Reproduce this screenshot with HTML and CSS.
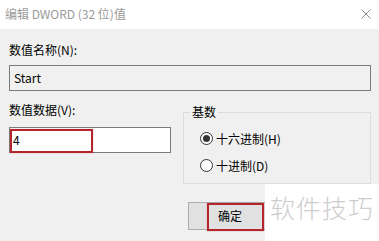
FILE: index.html
```html
<!DOCTYPE html>
<html lang="zh-CN">
<head>
    <meta charset="UTF-8">
    <title>编辑 DWORD (32 位)值</title>
    <link rel="stylesheet" href="styles.css">
</head>
<body>
    <div class="titlebar">
        <span class="title">编辑 DWORD (32 位)值</span>
        <svg class="close" width="10" height="10" viewBox="0 0 10 10">
            <path d="M0.5 0.5 L9.5 9.5 M9.5 0.5 L0.5 9.5" stroke="#8c8c8c" stroke-width="1" fill="none"/>
        </svg>
    </div>

    <div class="content">
        <div class="label">数值名称(N):</div>
        <div class="field readonly">Start</div>

        <div class="row">
            <div class="col-left">
                <div class="label gap">数值数据(V):</div>
                <div class="field value">
                    4
                    <span class="mark mark-value"></span>
                </div>
            </div>

            <div class="group">
                <div class="group-title">基数</div>
                <div class="radios">
                    <div class="radio checked"><span class="dot"></span>十六进制(H)</div>
                    <div class="radio"><span class="dot"></span>十进制(D)</div>
                </div>
            </div>
        </div>

        <div class="actions">
            <div class="btn">
                确定
                <span class="mark mark-btn"></span>
            </div>
        </div>
    </div>

    <!-- watermark over the corner -->
    <div class="watermark">软件技巧</div>
</body>
</html>
```

FILE: styles.css
```css
* {
    box-sizing: border-box;
}

body {
    margin: 0;
    width: 379px;
    height: 241px;
    overflow: hidden;
    background: #f0f0f0;
    font-family: "Noto Sans CJK SC", "Noto Sans", sans-serif;
    font-size: 12px;
    color: #000;
    position: relative;
}

.titlebar {
    height: 29px;
    background: #fff;
    display: flex;
    align-items: center;
    justify-content: space-between;
    padding: 0 8px 2px 5px;
}

.title {
    color: #9a9a9a;
    font-size: 12px;
}

.content {
    padding: 13px 8px 0 9px;
}

.label {
    line-height: 16px;
    margin-bottom: 7px;
}

.label.gap {
    margin-bottom: 9px;
}

.field {
    height: 26px;
    border: 1px solid #7a7a7a;
    padding-left: 4px;
    line-height: 23px;
    position: relative;
}

.readonly {
    background: #f0f0f0;
}

.value {
    background: #fff;
    padding-left: 3px;
}

.row {
    display: grid;
    grid-template-columns: 162px 188px;
    gap: 12px;
    margin-top: 11px;
}

.group {
    border: 1px solid #dcdcdc;
    height: 72px;
    margin-top: 10px;
}

.group-title {
    width: fit-content;
    margin: -9px 0 0 6px;
    padding: 0 2px;
    line-height: 16px;
    background: #f0f0f0;
}

.radios {
    margin-top: 5px;
}

.radio {
    height: 27px;
    display: flex;
    align-items: center;
    padding-left: 16px;
}

.dot {
    width: 13px;
    height: 13px;
    border: 1px solid #333;
    border-radius: 50%;
    background: #fff;
    margin-right: 3px;
    position: relative;
}

.radio.checked .dot::after {
    content: "";
    position: absolute;
    left: 2px;
    top: 2px;
    width: 7px;
    height: 7px;
    border-radius: 50%;
    background: #333;
}

.actions {
    display: flex;
    padding-left: 179px;
    margin-top: 18px;
}

.btn {
    width: 86px;
    height: 28px;
    background: #e1e1e1;
    border: 1px solid #adadad;
    line-height: 26px;
    padding-left: 29px;
    position: relative;
}

.mark {
    position: absolute;
    border: 2px solid #b3262b;
    box-shadow: 0 0 1px rgba(200, 40, 40, 0.5);
}

.mark-value {
    left: 0;
    top: 1px;
    width: 83px;
    height: 24px;
}

.mark-btn {
    left: 18px;
    top: 0;
    width: 57px;
    height: 28px;
}

.watermark {
    position: absolute;
    right: 0;
    bottom: 0;
    width: 114px;
    height: 57px;
    background: #fff;
    color: #cdcdcd;
    font-size: 25px;
    font-weight: 300;
    letter-spacing: 1px;
    padding: 10px 0 0 5px;
    line-height: 26px;
}
```
